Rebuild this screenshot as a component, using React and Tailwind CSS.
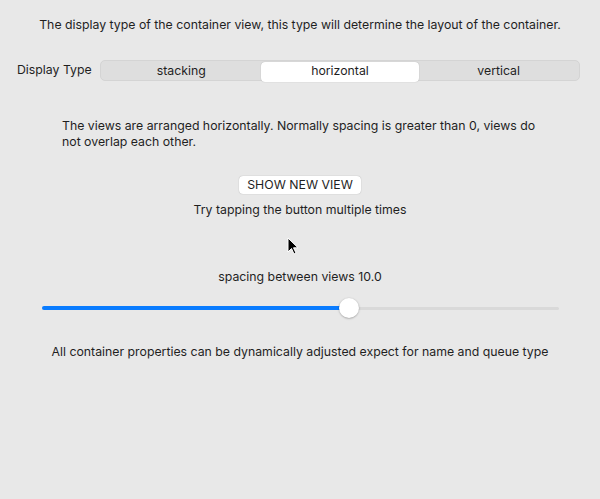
import React from 'react';

const SEGMENTS = ['stacking', 'horizontal', 'vertical'];

const App = () => {
  const selected = 'horizontal';
  const spacing = 0.595; // slider position

  return (
    <div
      className="relative w-[600px] h-[499px] bg-[#e8e8e8] text-[#1f1f1f] text-[12.3px] overflow-hidden"
      style={{ fontFamily: 'Inter, "Liberation Sans", sans-serif' }}
    >
      <div className="flex flex-col items-center pt-[16px]">
        <p className="leading-[18px]">
          The display type of the container view, this type will determine the layout of the container.
        </p>

        {/* display type picker */}
        <div className="flex items-center w-full pl-[17px] pr-[20px] mt-[26px]">
          <span className="w-[83px] leading-[18px] -mt-[1px]">Display Type</span>
          <div className="flex-1 grid grid-cols-3 h-[21px] rounded-[5px] bg-[#dedede] border border-[#d4d4d4] p-[1px]">
            {SEGMENTS.map(s => (
              <div
                key={s}
                className={
                  s === selected
                    ? 'flex items-center justify-center pb-[2px] rounded-[4px] bg-white shadow-[0_0_1px_rgba(0,0,0,0.3)]'
                    : 'flex items-center justify-center pb-[2px]'
                }
              >
                {s}
              </div>
            ))}
          </div>
        </div>

        <p className="w-[476px] mt-[37px] leading-[16px]">
          The views are arranged horizontally. Normally spacing is greater than 0, views do not overlap each other.
        </p>

        <button className="mt-[26px] h-[18px] px-[8px] bg-white rounded-[4px] shadow-[0_0_1px_rgba(0,0,0,0.35)] leading-[18px]">
          SHOW NEW VIEW
        </button>
        <p className="mt-[7px] leading-[18px]">Try tapping the button multiple times</p>

        <p className="mt-[49px] leading-[18px]">spacing between views 10.0</p>

        {/* slider */}
        <div className="relative w-[517px] h-[22px] mt-[11px] flex items-center">
          <div className="w-full h-[3px] rounded-full bg-[#d9d9d9]" />
          <div
            className="absolute left-0 h-[4px] rounded-full bg-[#0a7cff]"
            style={{ width: `${spacing * 100}%` }}
          />
          <div
            className="absolute w-[20px] h-[20px] -ml-[10px] rounded-full bg-white shadow-[0_0.5px_2px_rgba(0,0,0,0.35)]"
            style={{ left: `${spacing * 100}%` }}
          />
        </div>

        <p className="mt-[24px] leading-[18px]">
          All container properties can be dynamically adjusted expect for name and queue type
        </p>
      </div>

      {/* mouse cursor */}
      <svg className="absolute left-[287px] top-[237px]" width="12" height="18" viewBox="0 0 12 18">
        <path d="M1 1 L1 15 L4.5 11.5 L7 17 L9 16 L6.5 10.8 L11 10.8 Z" fill="#000" stroke="#fff" strokeWidth="1" />
      </svg>
    </div>
  );
};

export default App;
